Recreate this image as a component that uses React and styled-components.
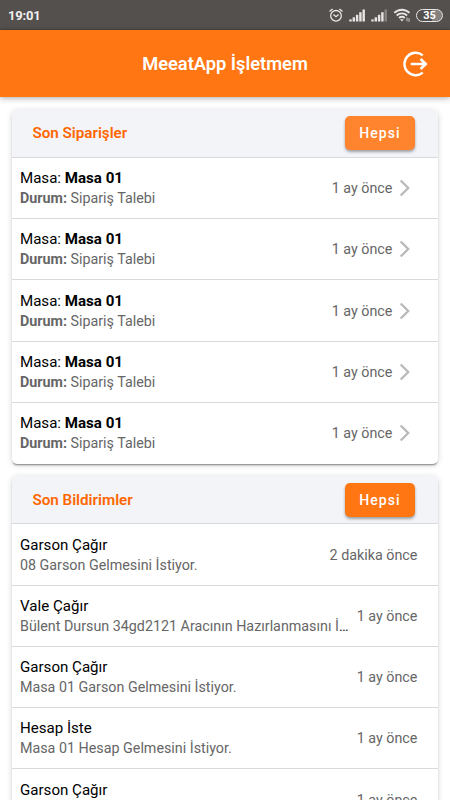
import React from "react";
import styled, { createGlobalStyle } from "styled-components";

const orders = Array.from({ length: 5 }, (_, i) => ({
  id: i,
  table: "Masa 01",
  status: "Sipariş Talebi",
  time: "1 ay önce",
}));

const notifications = [
  { title: "Garson Çağır", text: "08 Garson Gelmesini İstiyor.", time: "2 dakika önce" },
  { title: "Vale Çağır", text: "Bülent Dursun 34gd2121 Aracının Hazırlanmasını İstiyor.", time: "1 ay önce" },
  { title: "Garson Çağır", text: "Masa 01 Garson Gelmesini İstiyor.", time: "1 ay önce" },
  { title: "Hesap İste", text: "Masa 01 Hesap Gelmesini İstiyor.", time: "1 ay önce" },
  { title: "Garson Çağır", text: "Masa 01 Garson Gelmesini İstiyor.", time: "1 ay önce" },
];

function AlarmIcon() {
  return (
    <svg width="14" height="14" viewBox="0 0 14 14" fill="none" stroke="#e8e6e5" strokeWidth="1.3">
      <circle cx="7" cy="7.8" r="5.3" />
      <path d="M4.4 6.5 7 8.7 9.6 6.5M.5 3.6 3.6.9M13.5 3.6 10.4.9" />
    </svg>
  );
}

function SignalIcon({ weak }) {
  return (
    <svg width="17" height="13" viewBox="0 0 17 13" fill="#e8e6e5">
      <rect x="0.3" y="10.4" width="2.4" height="2.1" />
      <rect x="3.6" y="8.3" width="2.4" height="4.2" />
      <rect x="6.9" y="5.8" width="2.4" height="6.7" />
      <rect x="10.2" y="3.2" width="2.4" height="9.3" />
      <rect x="13.5" y="0.5" width="2.4" height="12" opacity={weak ? 0.35 : 1} />
    </svg>
  );
}

function WifiIcon() {
  return (
    <svg width="18" height="14" viewBox="0 0 18 14" fill="none" stroke="#e8e6e5" strokeWidth="1.9">
      <path d="M1.3 4.9c4.2-4.3 11-4.3 15.2 0M3.7 7.5c3-2.9 7.4-2.9 10.4 0M6.1 10c1.6-1.6 4-1.6 5.6 0" />
      <path d="M7 11.3h3.8l-1.9 2.2z" fill="#e8e6e5" stroke="none" />
      <path d="M14 9.6v3.6M16 10.2v3.6" strokeWidth="1.1" opacity=".75" />
    </svg>
  );
}

function LogoutIcon() {
  return (
    <svg width="26" height="26" viewBox="0 0 26 26" fill="none" stroke="#fff" strokeWidth="2.4">
      <path d="M20.8 4.4A11.2 11.2 0 1 0 20.8 21.6" />
      <path d="M8.8 13H23.4M18.6 8 23.7 13 18.6 18" strokeWidth="2.7" />
    </svg>
  );
}

function ChevronIcon() {
  return (
    <svg width="12" height="18" viewBox="0 0 12 18" fill="none" stroke="#b9b9b9" strokeWidth="2.3">
      <path d="M1.7 1.5 9.2 9 1.7 16.5" />
    </svg>
  );
}

function CardHeader({ title, light }) {
  return (
    <Heading>
      <HeadingTitle>{title}</HeadingTitle>
      <AllButton $light={light}>Hepsi</AllButton>
    </Heading>
  );
}

export default function App() {
  return (
    <Screen>
      <GlobalStyle />
      <StatusBar>
        <Clock>19:01</Clock>
        <StatusIcons>
          <AlarmIcon />
          <SignalIcon />
          <SignalIcon weak />
          <WifiIcon />
          <Battery>35</Battery>
        </StatusIcons>
      </StatusBar>
      <Toolbar>
        <ToolbarTitle>MeeatApp İşletmem</ToolbarTitle>
        <LogoutButton aria-label="Çıkış">
          <LogoutIcon />
        </LogoutButton>
      </Toolbar>
      <Content>
        <Card>
          <CardHeader title="Son Siparişler" light />
          {orders.map((order) => (
            <Row key={order.id}>
              <RowText>
                <Primary>
                  Masa: <b>{order.table}</b>
                </Primary>
                <Secondary>
                  <span>
                    <b>Durum:</b> {order.status}
                  </span>
                </Secondary>
              </RowText>
              <Time>{order.time}</Time>
              <Arrow>
                <ChevronIcon />
              </Arrow>
            </Row>
          ))}
        </Card>
        <Card>
          <CardHeader title="Son Bildirimler" />
          {notifications.map((item, index) => (
            <Row key={index}>
              <RowText>
                <Primary>{item.title}</Primary>
                <Secondary>
                  <span>{item.text}</span>
                </Secondary>
              </RowText>
              <Time>{item.time}</Time>
            </Row>
          ))}
        </Card>
      </Content>
    </Screen>
  );
}

const GlobalStyle = createGlobalStyle`
  * {
    box-sizing: border-box;
  }

  body {
    margin: 0;
    background: #fff;
    font-family: Roboto, "Liberation Sans", sans-serif;
  }
`;

const Screen = styled.div`
  display: flex;
  flex-direction: column;
  height: 100vh;
  overflow: hidden;
`;

const StatusBar = styled.div`
  display: flex;
  flex: none;
  align-items: center;
  justify-content: space-between;
  height: 30px;
  padding: 1px 7px 0 8px;
  background: #54504e;
  border-bottom: 1px solid #4b4740;
`;

const Clock = styled.span`
  color: #f1efee;
  font-size: 13px;
  font-weight: 700;
  letter-spacing: -0.2px;
`;

const StatusIcons = styled.div`
  display: flex;
  align-items: center;
  gap: 5px;

  svg {
    display: block;
  }

  svg:first-child {
    margin-right: 1px;
  }
`;

const Battery = styled.span`
  width: 27px;
  height: 13px;
  border: 1.5px solid #e8e6e5;
  border-radius: 7px;
  color: #fff;
  font-size: 11px;
  font-weight: 700;
  line-height: 12px;
  text-align: center;
  background: linear-gradient(90deg, #54504e 60%, #85817f 60%);
`;

const Toolbar = styled.header`
  display: grid;
  flex: none;
  grid-template-columns: 48px 1fr 48px;
  align-items: center;
  height: 67px;
  padding: 0 11px;
  background: #ff7613;
  box-shadow: 0 1px 6px rgba(0, 0, 0, 0.35);
  z-index: 1;
`;

const ToolbarTitle = styled.h1`
  grid-column: 2;
  margin: 0;
  color: #fff;
  font-size: 18.3px;
  font-weight: 600;
  text-align: center;
  white-space: nowrap;
`;

const LogoutButton = styled.button`
  display: flex;
  justify-content: center;
  padding: 0;
  border: 0;
  background: none;
`;

const Content = styled.main`
  display: flex;
  flex-direction: column;
  gap: 12.3px;
  padding: 12.9px 12px 0 12.4px;
`;

const Card = styled.section`
  flex: none;
  border-radius: 5px;
  background: #fff;
  box-shadow: 0 2px 2px -1px rgba(0, 0, 0, 0.45), 0 1px 6px rgba(0, 0, 0, 0.16);
`;

const Heading = styled.div`
  display: flex;
  align-items: center;
  justify-content: space-between;
  height: 48px;
  padding: 0 23px 0 20px;
  border-bottom: 1px solid #d8dade;
  border-radius: 5px 5px 0 0;
  background: #f3f4f8;
`;

const HeadingTitle = styled.h2`
  margin: 0;
  color: #ff6600;
  font-size: 15.2px;
  font-weight: 600;
`;

const AllButton = styled.button`
  width: 70px;
  height: 34px;
  padding: 0;
  border: 0;
  border-radius: 5px;
  background: ${(props) => (props.$light ? "#ff842d" : "#ff7613")};
  box-shadow: 0 2px 3px rgba(0, 0, 0, 0.35);
  color: #fff;
  font-family: inherit;
  font-size: 14px;
  font-weight: 500;
  letter-spacing: 1.1px;
`;

const Row = styled.div`
  display: flex;
  align-items: center;
  height: 61.25px;
  padding: 0 20.6px 0 7.6px;
  border-bottom: 1px solid #dadada;

  &:last-child {
    border-bottom-color: transparent;
  }
`;

const RowText = styled.div`
  flex: 1;
  min-width: 0;
  line-height: 20px;
`;

const Primary = styled.div`
  color: #000;
  font-size: 15.1px;
`;

/* the ellipsis takes the block colour, the text itself is grey */
const Secondary = styled.div`
  overflow: hidden;
  color: #222;
  font-size: 14.3px;
  text-overflow: ellipsis;
  white-space: nowrap;

  span {
    color: #666;
  }
`;

const Time = styled.span`
  flex: none;
  margin-left: 5px;
  color: #666;
  font-size: 14.3px;
`;

const Arrow = styled.span`
  display: flex;
  margin: 0 6px 0 7px;
`;
